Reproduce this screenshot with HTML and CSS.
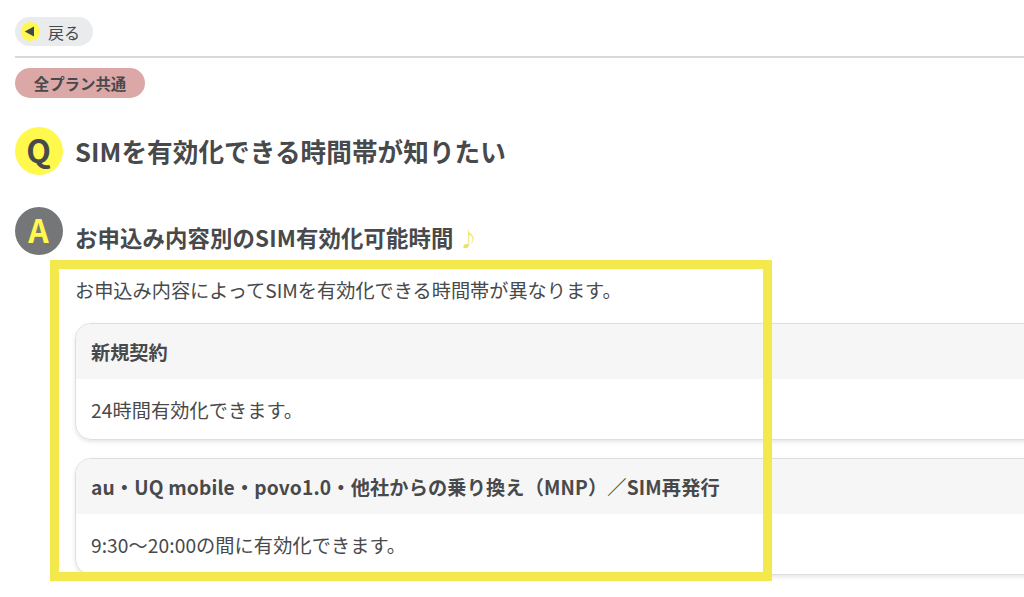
FILE: index.html
```html
<!DOCTYPE html>
<html lang="ja">
<head>
<meta charset="utf-8">
<title>SIMを有効化できる時間帯が知りたい</title>
<link rel="stylesheet" href="styles.css">
</head>
<body>
<header class="topbar">
  <a class="back"><svg class="back-icon" viewBox="0 0 18 18"><circle cx="9" cy="9" r="9" fill="#fff84d"/><path d="M3.5 9 12.3 4.3v9.4z" fill="#444648"/></svg><span class="back-label">戻る</span></a>
</header>
<main class="page">
  <span class="plan">全プラン共通</span>
  <section class="question">
    <span class="badge badge-q">Q</span>
    <h1 class="title">SIMを有効化できる時間帯が知りたい</h1>
  </section>
  <section class="answer">
    <span class="badge badge-a">A</span>
    <div class="body">
      <h2 class="subtitle">お申込み内容別のSIM有効化可能時間<span class="note">♪</span></h2>
      <p class="lead">お申込み内容によってSIMを有効化できる時間帯が異なります。</p>
      <article class="card">
        <h3 class="card-head">新規契約</h3>
        <p class="card-text">24時間有効化できます。</p>
      </article>
      <article class="card">
        <h3 class="card-head card-head-wide">au・UQ mobile・povo1.0・他社からの乗り換え（MNP）／SIM再発行</h3>
        <p class="card-text">9:30〜20:00の間に有効化できます。</p>
      </article>
    </div>
  </section>
  <div class="highlight"></div>
</main>
</body>
</html>
```
FILE: styles.css
```css
* { box-sizing: border-box; margin: 0; padding: 0; }
body { height: 597px; overflow: hidden; background: #fff; color: #47494b; font-family: "Noto Sans CJK JP", sans-serif; }
.topbar { height: 41px; margin: 17px 0 0 15px; border-bottom: 2px solid #d9d9d9; }
.back { display: flex; align-items: center; width: 78px; height: 29px; padding-left: 6px; gap: 9px; border-radius: 15px; background: #e9ebed; font-size: 16px; line-height: 28px; }
.back-icon { width: 19px; height: 19px; }
.back-label { margin-left: -1px; }
.page { position: relative; padding: 10px 0 0 15px; }
.plan { display: flex; align-items: center; justify-content: center; width: 130px; height: 30px; padding-bottom: 1px; border-radius: 15px; background: #dba8a7; font-size: 15.4px; font-weight: 700; line-height: 28px; }
.question { display: flex; align-items: center; gap: 12px; margin-top: 29px; height: 48px; }
.badge { display: flex; flex: none; align-items: center; justify-content: center; width: 48px; height: 48px; padding: 0 1px 4px 0; border-radius: 50%; font-size: 32px; font-weight: 700; line-height: 1; }
.badge-q { background: #fff84d; }
.badge-a { background: #757678; color: #fff84d; }
.title { padding-bottom: 2px; font-size: 25.6px; letter-spacing: .07px; white-space: nowrap; }
.answer { display: flex; gap: 12px; margin-top: 32px; }
.body { flex: 1; padding-top: 13px; }
.subtitle { height: 34px; font-size: 22.4px; line-height: 34px; letter-spacing: .12px; white-space: nowrap; }
.note { margin-left: 5px; color: #ebe360; font-size: 20px; font-weight: 700; }
.lead { margin-top: 21px; margin-bottom: 18px; font-size: 19.2px; line-height: 30px; letter-spacing: -.01px; }
.card { width: 980px; height: 117px; border: 1px solid #dedede; border-radius: 16px; overflow: hidden; box-shadow: 0 2px 4px rgba(0,0,0,.1); }
.card + .card { margin-top: 18px; }
.card-head { height: 55px; padding-left: 15px; background: #f6f6f6; font-size: 19.2px; line-height: 57px; }
.card-head-wide { letter-spacing: .15px; }
.card-text { padding-left: 15px; font-size: 19.2px; line-height: 62px; letter-spacing: .07px; }
.highlight { position: absolute; left: 50px; top: 202px; width: 722px; height: 321px; border: 9px solid #f3e94c; }
```
